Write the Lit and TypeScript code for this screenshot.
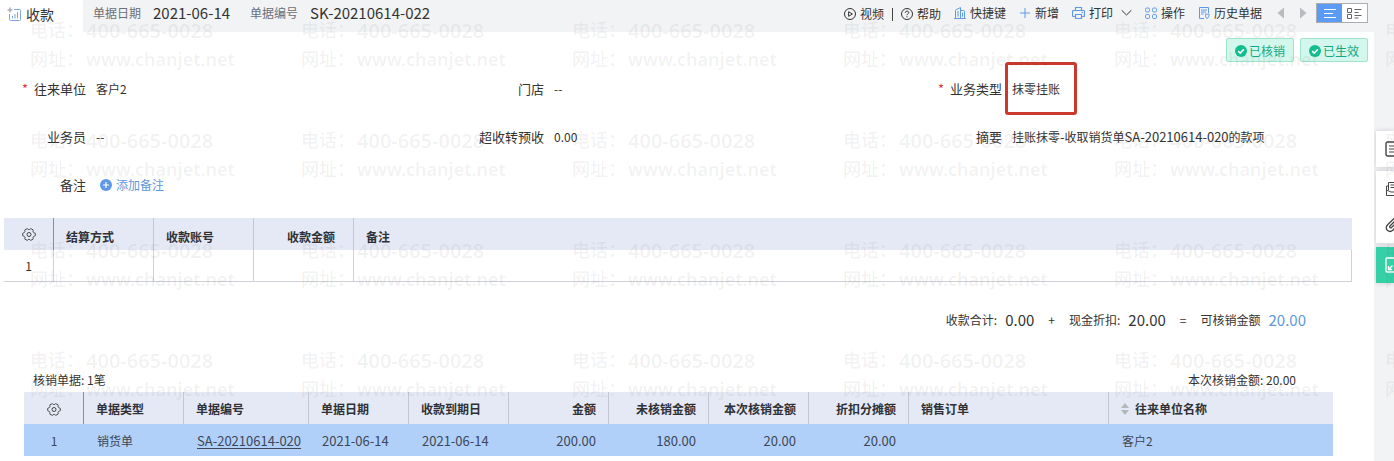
import { LitElement, html, svg, css, nothing } from "lit";
import { customElement } from "lit/decorators.js";

const COLS = [0, 1, 2, 3, 4, 5];
const ROWS = [0, 1, 2, 3];

const icon = (body: unknown, w = 12, h = 12) => html`<svg
  width=${w} height=${h} viewBox="0 0 ${w} ${h}" fill="none"
  stroke="currentColor" stroke-width="1" aria-hidden="true">${body}</svg>`;

const receiptIcon = icon(svg`
  <path d="M7 2.5h5.5a1 1 0 0 1 1 1v9a1 1 0 0 1-1 1h-9a1 1 0 0 1-1-1V7" stroke="#7aa5e0"/>
  <path d="M3 .5v5M.5 3h5" stroke="#8a93a3"/>
  <path d="M5.5 11.5V9M8 11.5V7M10.5 11.5V5" stroke="#7aa5e0"/>`, 15, 15);
const playIcon = icon(svg`<circle cx="6" cy="6" r="5.5"/><path d="M4.6 3.7v4.6L8.4 6z"/>`);
const helpIcon = icon(svg`<circle cx="6" cy="6" r="5.5"/>
  <path d="M4.3 4.8c0-2.3 3.5-2.2 3.5-.2C7.8 5.9 6 5.8 6 7.2M6 8.2v1.1"/>`);
const shortcutIcon = icon(svg`
  <path d="M1.5 11.5v-8a1 1 0 0 1 1-1l4-2v11M6.500 3.500h3a1 1 0 0 1 1 1v7M.2 11.500h11.600M4 4v5.700M8.500 5.700v4"/>`);
const plusIcon = icon(svg`<path d="M6 1v10M1 6h10"/>`);
const printIcon = icon(svg`
  <path d="M3.5 3.5v-3h6v3M3.5 9.5h-2a1 1 0 0 1-1-1v-4a1 1 0 0 1 1-1h10a1 1 0 0 1 1 1v4a1 1 0 0 1-1 1h-2M3.5 7.5h6v4h-6zM9.5 5.5h1.5" stroke-width="1.2"/>`, 13, 12);
const chevronIcon = icon(svg`<path d="M.7 3.3 5.5 8l4.8-4.7"/>`, 11, 12);
const gridIcon = icon(svg`
  <rect x=".5" y="1" width="4" height="4" rx="1.3"/><rect x="7.5" y="1" width="4" height="4" rx="1.3"/>
  <rect x=".5" y="7.5" width="4" height="4" rx="1.3"/><rect x="7.5" y="7.5" width="4" height="4" rx="1.3"/>`);
const historyIcon = icon(svg`
  <path d="M6 11.5H1.5V.5h9V6M3 3h6M3 5h5M3 7h2.5M7 7.2h4.5M7.5 7.5c0 2 0 3 1.5 4 1.8-1 2-2 2-4"/>`);
const leftIcon = icon(svg`<path d="M7 .5v11L.5 6z" fill="#b9bbbf" stroke="none"/>`, 7, 12);
const rightIcon = icon(svg`<path d="M0 .5v11L6.5 6z" fill="#b9bbbf" stroke="none"/>`, 7, 12);
const listIcon = icon(svg`<path d="M1 1.5h12M1 5.5h9M1 9.5h12"/>`, 14, 11);
const cardIcon = icon(svg`
  <path d="M.5 .5h4v4h-4zM.5 6.5h4v4h-4zM7.5 1.5h7M7.5 4.5h4M7.5 7.5h7M7.5 10h4"/>`, 15, 11);
const checkIcon = icon(svg`<circle cx="6" cy="6" r="6" fill="#12bd8e" stroke="none"/>
  <path d="M3.2 6.2 5.2 8.1 8.9 4.2" stroke="#fff" stroke-width="1.6"/>`);
const addIcon = icon(svg`<circle cx="6" cy="6" r="6" fill="#5e98e9" stroke="none"/>
  <path d="M6 3v6M3 6h6" stroke="#fff" stroke-width="1.2"/>`);
const gearIcon = icon(svg`
  <path d="M4.9.8q.4-.3.8 0 .5.9 1.3.9t1.3-.9q.4-.3.8 0l2 1.1q.3.3.1.8-.4.9.1 1.5.4.7 1.5.8.5.1.5.5v2q0 .4-.5.5-1.1.1-1.5.8-.5.6-.1 1.5.2.5-.1.8l-2 1.1q-.4.3-.8 0-.5-.9-1.3-.9t-1.3.9q-.4.3-.8 0l-2-1.1q-.3-.3-.1-.8.4-.9-.1-1.5-.4-.7-1.5-.8-.5-.1-.5-.5v-2q0-.4.5-.5 1.1-.1 1.5-.8.5-.6.1-1.5-.2-.5.1-.8z"/>
  <circle cx="7" cy="6.5" r="2"/>`, 14, 13);
const sortIcon = icon(svg`<path d="M4 0 8 5H0zM4 12 8 7H0z" fill="#b4b8b8" stroke="none"/>`, 8, 12);
const noteIcon = icon(svg`<rect x="1" y="1" width="14" height="14" rx="1.5" stroke-width="1.4"/>
  <path d="M4 5h8M4 8h8M4 11h8" stroke-width="1.2"/>`, 16, 16);
const docsIcon = icon(svg`
  <path d="M3.5 9V1.5h9V9M5.5 4h5M5.5 6.5h5M3.5 5h-2v9.5h13V9H10v2H6L1.500 9"/>`, 16, 16);
const clipIcon = icon(svg`
  <path d="M14 7 8 13c-1.700 1.700-4 1.800-5.600.3s-1.500-3.900.2-5.600L8.500 2c2.300-2 5.500 1 3.300 3.300L6.500 10.500c-1.100 1-2.500-.4-1.500-1.500L9.500 4.500" stroke-width="1.3"/>`, 16, 16);
const shrinkIcon = icon(svg`<rect x="1" y="1" width="14" height="14" rx="1" stroke-width="1.3"/>
  <path d="M7.5 8.5 3.5 12.5M3.5 9v3.5H7" stroke-width="1.3"/>`, 16, 16);

interface Column { title: string; width?: number; right?: boolean; sort?: boolean }

const settleColumns: Column[] = [
  { title: "结算方式", width: 100 },
  { title: "收款账号", width: 100 },
  { title: "收款金额", width: 100, right: true },
  { title: "备注" },
];

const writeOffColumns: Column[] = [
  { title: "单据类型", width: 100 },
  { title: "单据编号", width: 125 },
  { title: "单据日期", width: 100 },
  { title: "收款到期日", width: 100 },
  { title: "金额", width: 100, right: true },
  { title: "未核销金额", width: 100, right: true },
  { title: "本次核销金额", width: 100, right: true },
  { title: "折扣分摊额", width: 100, right: true },
  { title: "销售订单", width: 200 },
  { title: "往来单位名称", sort: true },
];

const writeOffRow = [
  html`销货单`,
  html`<a class="doc num" href="#SA-20210614-020">SA-20210614-020</a>`,
  html`<span class="num">2021-06-14</span>`,
  html`<span class="num">2021-06-14</span>`,
  html`<span class="num">200.00</span>`,
  html`<span class="num">180.00</span>`,
  html`<span class="num">20.00</span>`,
  html`<span class="num">20.00</span>`,
  nothing,
  html`客户2`,
];

@customElement("app-root")
export class AppRoot extends LitElement {
  static styles = css`
    :host {
      display: block;
      position: relative;
      min-height: 100vh;
      overflow: hidden;
      background: #f2f3f5;
      color: #333;
      font: 12px/18px "Noto Sans CJK SC", sans-serif;
    }
    * { box-sizing: border-box; }
    svg { display: block; flex: none; }
    button {
      border: 0; padding: 0; background: none; color: inherit; font: inherit;
      display: flex; align-items: center; gap: 4px; cursor: pointer; white-space: nowrap;
    }
    .page { display: flex; flex-direction: column; min-height: 100vh; }
    .topbar { display: flex; height: 32px; }
    .tab {
      display: flex; align-items: center; gap: 4px; width: 83px; padding: 0 0 4px 7px;
      background: #fff; font-size: 14px; margin: 0; font-weight: 400;
    }
    .meta { display: flex; gap: 20px; padding: 0 0 6px 10px; margin: 0; align-items: center; }
    .meta div { display: flex; gap: 12px; align-items: center; }
    .meta dt { color: #6b6f76; }
    .meta dd { margin: 0; font-size: 15px; }
    .tools {
      display: flex; align-items: center; gap: 13px; margin-left: auto;
      padding: 0 26px 6px 0;
    }
    .help { display: flex; align-items: center; gap: 8px; padding-top: 2px; }
    .bar { width: 1px; height: 13px; background: #444; }
    .blue svg { color: #5e98e9; }
    .print { display: flex; align-items: center; gap: 8px; }
    .pager { display: flex; gap: 16px; padding-left: 2px; }
    .views { display: flex; border: 1px solid #a9adb3; background: #fff; margin-left: -4px; }
    .views button { width: 25px; height: 18px; justify-content: center; color: #666; }
    .views .on { background: #5b9bf3; color: #fff; }
    .body { display: flex; flex: 1; }
    main { flex: 1; min-width: 0; background: #fff; }
    .statuses { display: flex; justify-content: flex-end; gap: 6px; padding: 6px 6px 3px; }
    .status {
      display: flex; align-items: center; justify-content: center; gap: 2px;
      width: 68px; height: 24px; padding-top: 2px; color: #12a985;
      background: #d3f7ec; border: 1px solid #9fe3cd; border-radius: 2px;
    }
    .form { display: grid; grid-template-columns: repeat(3, 1fr); grid-auto-rows: 48px; margin: 0; }
    .field { display: flex; align-items: center; gap: 10px; }
    .field dt { width: 86px; text-align: right; font-size: 13px; white-space: nowrap; }
    .field dd { margin: 0; position: relative; white-space: nowrap; }
    .req { color: #e0393e; margin-right: 6px; }
    .num { font-size: 13px; }
    .add { color: #5e98d8; margin-left: 4px; }
    .mark {
      position: absolute; left: -7px; top: -18px; width: 72px; height: 53px;
      border: 3px solid #cb392c; border-radius: 3px;
    }
    table { border-collapse: separate; border-spacing: 0; table-layout: fixed; width: 100%; }
    th, td { height: 32px; padding: 0 12px; text-align: left; white-space: nowrap; }
    th { background: #e5e9f5; border-right: 1px solid #c3c7d3; font-weight: 700; color: #2f3136; }
    th:first-child { border-right-color: #8b8e96; }
    th:last-child { border-right: 0; }
    th:first-child, td:first-child { text-align: center; padding: 0; }
    th .right, .right { text-align: right; }
    .gear { margin: 0 auto; color: #444; }
    .c-index { width: 50px; }
    .settle { padding: 9px 22px 0 4px; }
    .settle th { padding-top: 5px; }
    .settle th:first-child { padding-top: 0; }
    .settle .right { padding-right: 18px; }
    .settle td { border-right: 1px solid #cfd1d6; border-bottom: 1px solid #cfd1d6; }
    .totals {
      display: flex; justify-content: flex-end; align-items: center; gap: 8px;
      padding: 28px 68px 0 0; line-height: 20px;
    }
    .totals output { font-size: 15px; }
    .totals .op { padding: 0 6px; }
    .totals .final { color: #5e98d8; }
    .caption { display: flex; justify-content: space-between; padding: 41px 78px 3px 33px; }
    .writeoff { padding: 0 41px 0 24px; }
    .writeoff th { padding-top: 2px; }
    .writeoff td { background: #b1d0f9; padding: 1px 13px 0; color: #3c4658; }
    .writeoff .c-index { width: 60px; }
    .doc { color: inherit; text-decoration: underline; text-underline-offset: 2px; }
    .sort { display: flex; align-items: center; gap: 6px; }
    .dock {
      display: flex; flex-direction: column; gap: 4px; width: 20px;
      padding: 99px 0 0 2px; overflow: hidden;
    }
    .group { background: #fff; box-shadow: 0 0 5px #c9cbd0; }
    .group button { width: 36px; height: 36px; padding-left: 9px; color: #444; }
    .group .go { background: #35d0a8; color: #fff; }
    .watermark {
      position: absolute; inset: 0; overflow: hidden; pointer-events: none;
      display: grid; grid-template-columns: repeat(6, 271px); grid-auto-rows: 110px;
      padding: 16px 0 0 30px; color: rgba(60, 60, 60, 0.07);
      font: 600 18px/29px "Noto Sans", "Noto Sans CJK SC", sans-serif;
      white-space: nowrap;
    }
    .watermark div { display: grid; grid-template-columns: 56px auto; justify-content: start; align-content: start; }
    .watermark .label { font-weight: 500; }
    .watermark .tel { font-size: 20px; }
  `;

  private head(columns: Column[], name: string) {
    return html`
      <colgroup>
        <col class="c-index" />
        ${columns.map((c) => html`<col width=${c.width ?? nothing} />`)}
      </colgroup>
      <thead>
        <tr>
          <th scope="col"><button class="gear" aria-label=${name}>${gearIcon}</button></th>
          ${columns.map((c) => html`<th scope="col" class=${c.right ? "right" : ""}>
            ${c.sort ? html`<span class="sort">${sortIcon}${c.title}</span>` : c.title}
          </th>`)}
        </tr>
      </thead>`;
  }

  private field(label: string, value: unknown, required = false) {
    return html`<div class="field">
      <dt>${required ? html`<span class="req">*</span>` : nothing}${label}</dt>
      <dd>${value}</dd>
    </div>`;
  }

  render() {
    return html`
      <div class="page">
        <header class="topbar">
          <h1 class="tab">${receiptIcon}收款</h1>
          <dl class="meta">
            <div><dt>单据日期</dt><dd>2021-06-14</dd></div>
            <div><dt>单据编号</dt><dd>SK-20210614-022</dd></div>
          </dl>
          <nav class="tools">
            <div class="help">
              <button>${playIcon}视频</button>
              <span class="bar"></span>
              <button>${helpIcon}帮助</button>
            </div>
            <button class="blue">${shortcutIcon}快捷键</button>
            <button class="blue">${plusIcon}新增</button>
            <div class="print">
              <button class="blue">${printIcon}打印</button>
              <button aria-label="打印选项">${chevronIcon}</button>
            </div>
            <button class="blue">${gridIcon}操作</button>
            <button class="blue">${historyIcon}历史单据</button>
            <div class="pager">
              <button aria-label="上一张">${leftIcon}</button>
              <button aria-label="下一张">${rightIcon}</button>
            </div>
            <div class="views">
              <button class="on" aria-label="单据视图">${listIcon}</button>
              <button aria-label="列表视图">${cardIcon}</button>
            </div>
          </nav>
        </header>
        <div class="body">
          <main>
            <div class="statuses">
              <span class="status">${checkIcon}已核销</span>
              <span class="status">${checkIcon}已生效</span>
            </div>
            <dl class="form">
              ${this.field("往来单位", "客户2", true)}
              ${this.field("门店", "--")}
              ${this.field("业务类型", html`抹零挂账<span class="mark"></span>`, true)}
              ${this.field("业务员", "--")}
              ${this.field("超收转预收", "0.00")}
              ${this.field("摘要", html`挂账抹零<span class="num">-</span>收取销货单<span class="num">SA-20210614-020</span>的款项`)}
              ${this.field("备注", html`<button class="add">${addIcon}添加备注</button>`)}
            </dl>
            <section class="settle">
              <table>
                ${this.head(settleColumns, "结算列设置")}
                <tbody><tr><td>1</td><td></td><td></td><td></td><td></td></tr></tbody>
              </table>
            </section>
            <div class="totals">
              <span>收款合计:</span><output>0.00</output>
              <span class="op">+</span>
              <span>现金折扣:</span><output>20.00</output>
              <span class="op">=</span>
              <span>可核销金额</span><output class="final">20.00</output>
            </div>
            <div class="caption"><span>核销单据: 1笔</span><span>本次核销金额: 20.00</span></div>
            <section class="writeoff">
              <table>
                ${this.head(writeOffColumns, "核销列设置")}
                <tbody>
                  <tr>
                    <td>1</td>
                    ${writeOffRow.map((v, i) => html`<td class=${writeOffColumns[i].right ? "right" : ""}>${v}</td>`)}
                  </tr>
                </tbody>
              </table>
            </section>
          </main>
          <aside class="dock">
            <div class="group"><button aria-label="备忘">${noteIcon}</button></div>
            <div class="group">
              <button aria-label="单据">${docsIcon}</button>
              <button aria-label="附件">${clipIcon}</button>
            </div>
            <div class="group"><button class="go" aria-label="收起">${shrinkIcon}</button></div>
          </aside>
        </div>
      </div>
      <div class="watermark" aria-hidden="true">
        ${ROWS.map(() => COLS.map(() => html`<div>
          <span class="label">电话：</span><span class="tel">400-665-0028</span>
          <span class="label">网址：</span><span>www.chanjet.net</span>
        </div>`))}
      </div>
    `;
  }
}
